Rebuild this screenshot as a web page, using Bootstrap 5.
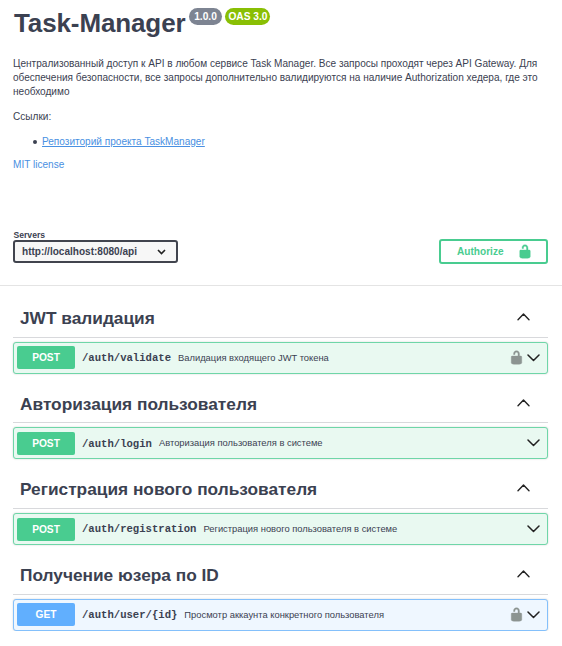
<!DOCTYPE html>
<html lang="ru">
<head>
<meta charset="utf-8">
<title>Task-Manager API</title>
<link href="https://cdn.jsdelivr.net/npm/bootstrap@5.3.0/dist/css/bootstrap.min.css" rel="stylesheet">
<style>
body{font-family:"Liberation Sans",Arial,sans-serif;color:#3b4151;font-size:10.07px;line-height:14.3px;overflow:hidden;background:#fff}
.page{padding:0 14px 0 13px}
.info{height:230px;padding-top:8px}
.api-title{font-size:26px;line-height:30px;font-weight:700;letter-spacing:-.12px;padding-left:1px}
.pill{height:17px;border-radius:9px;font-size:10.2px;line-height:17px;font-weight:700;color:#fff;margin-left:3.5px}
.pill-version{background:#7d8492;width:33px}
.pill-oas{background:#89bf04;width:45px}
.desc{margin:18.5px 0 11px;white-space:nowrap}
.links-label{margin-bottom:10px}
.api-link{color:#4990e2}
.links{padding-left:20px;margin-bottom:9px}
.links li::before{content:"";width:4px;height:4px;border-radius:50%;background:#3b4151;margin-right:5px}
.servers-bar{height:56px;border-bottom:1px solid #e4e4e4}
.servers-label{font-size:8.6px;line-height:10px;font-weight:700;padding-left:.5px}
.server-select{width:165px;height:23px;border:2px solid #41444e;border-radius:3px;background:#f7f7f7;font-size:10.05px;font-weight:700;padding:1px 10px 0 7px}
.authorize{width:109px;height:25px;border:2px solid #49cc90;border-radius:3px;color:#49cc90;font-size:10.1px;font-weight:700;padding:0 13px 0 16px;margin-top:9px}
.authorize span{padding-top:1px}
.tag-list{padding-top:2px}
.tag-head{height:49.7px;padding:0 18px 0 7px;border-bottom:1px solid #d8d9dc}
.tag-title{font-size:17.3px;line-height:20px;font-weight:700;margin:0;padding-top:11.5px}
.tag-head svg{margin-top:9px}
.op{height:32px;margin-top:4px;border:1px solid #6fd6a8;border-radius:3px;background:#e9f9f1;box-shadow:0 0 2px rgba(0,0,0,.19);padding:0 7px 0 3px}
.op-get{border-color:#84c0fb;background:#eff7ff}
.method{width:58px;height:23px;line-height:23px;border-radius:2px;background:#49cc90;color:#fff;font-size:10.2px;font-weight:700}
.op-get .method{background:#61affe}
.path{font-family:"Liberation Mono","DejaVu Sans Mono",monospace;font-weight:700;font-size:10.6px;margin-left:7px;padding-top:1px}
.summary{font-size:9.37px;margin-left:7px}
.lock{color:#8c9491;margin-right:3px}
</style>
<script src="https://cdn.jsdelivr.net/npm/bootstrap@5.3.0/dist/js/bootstrap.bundle.min.js"></script>
</head>
<body>
<svg class="d-none">
<symbol id="unlocked" viewBox="0 0 20 20"><path fill="currentColor" stroke="currentColor" stroke-width=".5" d="M15.8 8H14V5.6C14 2.703 12.665 1 10 1 7.334 1 6 2.703 6 5.6V6h2v-.801C8 3.754 8.797 3 10 3c1.203 0 2 .754 2 2.199V8H4c-.553 0-1 .646-1 1.199V17c0 .549.428 1.139.951 1.307l1.197.387C5.672 18.861 6.55 19 7.1 19h5.8c.549 0 1.428-.139 1.951-.307l1.196-.387c.524-.167.953-.757.953-1.306V9.199C17 8.646 16.352 8 15.8 8z"/></symbol>
<symbol id="up" viewBox="0 0 13 8"><path fill="none" stroke="#222" stroke-width="1.4" stroke-linecap="round" stroke-linejoin="round" d="M1 6.7 6.5 1l5.5 5.7"/></symbol>
<symbol id="down" viewBox="0 0 13 8"><path fill="none" stroke="#222" stroke-width="1.5" stroke-linecap="round" stroke-linejoin="round" d="M1 1l5.5 5.5L12 1"/></symbol>
</svg>
<header class="page info">
  <div class="d-flex align-items-start">
    <h1 class="api-title mb-0">Task-Manager</h1>
    <span class="pill pill-version text-center">1.0.0</span>
    <span class="pill pill-oas text-center">OAS 3.0</span>
  </div>
  <p class="desc">Централизованный доступ к API в любом сервисе Task Manager. Все запросы проходят через API Gateway. Для<br>обеспечения безопасности, все запросы дополнительно валидируются на наличие Authorization хедера, где это<br>необходимо</p>
  <p class="links-label">Ссылки:</p>
  <ul class="links list-unstyled"><li class="d-flex align-items-center"><a class="api-link" href="#">Репозиторий проекта TaskManager</a></li></ul>
  <a class="api-link text-decoration-none license" href="#">MIT license</a>
</header>
<section class="page servers-bar d-flex justify-content-between">
  <div>
    <div class="servers-label">Servers</div>
    <div class="server-select d-flex align-items-center justify-content-between"><span>http://localhost:8080/api</span><svg width="9" height="6" viewBox="0 0 9 6"><path d="M1 1l3.5 3.5L8 1" fill="none" stroke="#222" stroke-width="1.6"/></svg></div>
  </div>
  <div class="authorize d-flex align-items-center justify-content-between"><span>Authorize</span><svg width="16" height="15"><use href="#unlocked"/></svg></div>
</section>
<main class="page tag-list">
  <section>
    <div class="tag-head d-flex align-items-center justify-content-between"><h2 class="tag-title">JWT валидация</h2><svg width="13" height="8"><use href="#up"/></svg></div>
    <div class="op d-flex align-items-center"><span class="method text-center">POST</span><span class="path">/auth/validate</span><span class="summary">Валидация входящего JWT токена</span><svg class="lock ms-auto" width="15" height="15"><use href="#unlocked"/></svg><svg width="13" height="8"><use href="#down"/></svg></div>
  </section>
  <section>
    <div class="tag-head d-flex align-items-center justify-content-between"><h2 class="tag-title">Авторизация пользователя</h2><svg width="13" height="8"><use href="#up"/></svg></div>
    <div class="op d-flex align-items-center"><span class="method text-center">POST</span><span class="path">/auth/login</span><span class="summary">Авторизация пользователя в системе</span><svg class="ms-auto" width="13" height="8"><use href="#down"/></svg></div>
  </section>
  <section>
    <div class="tag-head d-flex align-items-center justify-content-between"><h2 class="tag-title">Регистрация нового пользователя</h2><svg width="13" height="8"><use href="#up"/></svg></div>
    <div class="op d-flex align-items-center"><span class="method text-center">POST</span><span class="path">/auth/registration</span><span class="summary">Регистрация нового пользователя в системе</span><svg class="ms-auto" width="13" height="8"><use href="#down"/></svg></div>
  </section>
  <section>
    <div class="tag-head d-flex align-items-center justify-content-between"><h2 class="tag-title">Получение юзера по ID</h2><svg width="13" height="8"><use href="#up"/></svg></div>
    <div class="op op-get d-flex align-items-center"><span class="method text-center">GET</span><span class="path">/auth/user/{id}</span><span class="summary">Просмотр аккаунта конкретного пользователя</span><svg class="lock ms-auto" width="15" height="15"><use href="#unlocked"/></svg><svg width="13" height="8"><use href="#down"/></svg></div>
  </section>
</main>
</body>
</html>
